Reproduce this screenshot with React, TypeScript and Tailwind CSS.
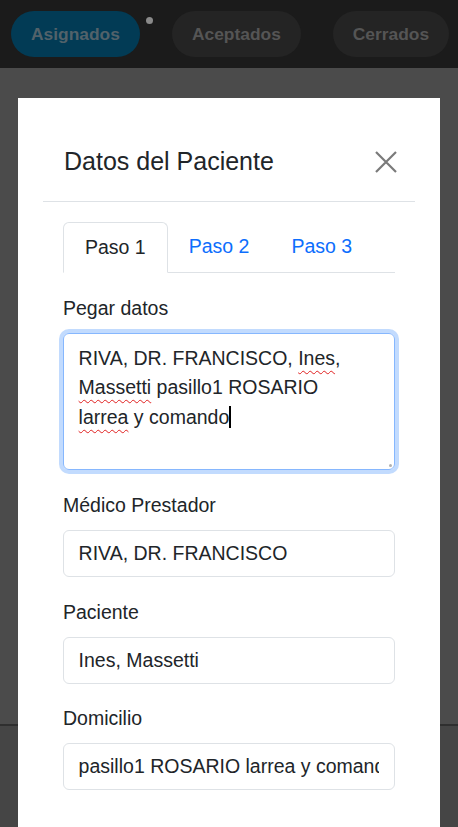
import React from "react";

const font = "font-['Liberation_Sans',Arial,sans-serif]";

const pills = [
  { label: "Asignados", active: true },
  { label: "Aceptados", active: false },
  { label: "Cerrados", active: false },
];

function Field({ label, value }: { label: string; value: string }) {
  return (
    <div className="mb-[20.5px]">
      <label className="block mb-[9.75px] text-[19.5px] leading-[29.25px] text-[#212529]">{label}</label>
      <div className="h-[47px] px-[14.6px] flex items-center border border-[#dee2e6] rounded-[6px] bg-white">
        <div className="w-full overflow-hidden whitespace-nowrap text-[19.5px] leading-[29.25px] text-[#212529]">{value}</div>
      </div>
    </div>
  );
}

const wavy = "underline decoration-wavy decoration-[#e02020] decoration-1 underline-offset-[5px]";

export default function App() {
  return (
    <div className={`relative h-[827px] w-[458px] overflow-hidden bg-[#454545] ${font}`}>
      {/* page behind the backdrop */}
      <div className="h-[68px] bg-[#1b1b1b] flex items-center pl-[11px] gap-[32px]">
        {pills.map((p, i) => (
          <div key={i} className="relative">
            <div
              className={
                p.active
                  ? "h-[46px] px-[20px] rounded-full bg-[#023b55] flex items-center text-[17.4px] font-bold text-[#52626a]"
                  : "h-[46px] px-[20px] rounded-full bg-[#242424] flex items-center text-[17.4px] font-bold text-[#555555]"
              }
            >
              {p.label}
            </div>
            {p.active && <span className="absolute right-[-13px] top-[6px] w-[7px] h-[7px] rounded-full bg-[#8a8a8a]" />}
          </div>
        ))}
      </div>
      <div className="h-[658px] bg-[#4b4b4b] border-b-2 border-[#2f2f2f]" />

      {/* modal */}
      <div className="absolute top-[98px] left-[18px] right-[18px] bottom-0 bg-white">
        <div className="mx-[25px] pt-[45px] pb-[22px] pl-[21px] pr-[19px] border-b border-[#dee2e6] flex items-center justify-between">
          <h5 className="text-[25px] leading-[36px] text-[#212529]">Datos del Paciente</h5>
          <svg width="22" height="22" viewBox="0 0 22 22" className="mr-[-1px] mt-[2px]">
            <path d="M1 1 L21 21 M21 1 L1 21" stroke="#7a7a7a" strokeWidth="2.2" fill="none" />
          </svg>
        </div>

        <div className="px-[45px] pt-[20px]">
          <div className="flex border-b border-[#dee2e6] text-[19.5px] leading-[29.25px]">
            <div className="-mb-px px-[21px] py-[9.75px] border border-[#dee2e6] border-b-white rounded-t-[6px] bg-white text-[#212529]">
              Paso 1
            </div>
            <div className="px-[21px] py-[9.75px] text-[#0d6efd]">Paso 2</div>
            <div className="px-[21px] py-[9.75px] text-[#0d6efd]">Paso 3</div>
          </div>

          <div className="pt-[21px]">
            <div className="mb-[21.5px]">
              <label className="block mb-[9.75px] text-[19.5px] leading-[29.25px] text-[#212529]">Pegar datos</label>
              <div className="relative h-[137px] px-[14.6px] pt-[10px] border border-[#86b7fe] rounded-[6px] shadow-[0_0_0_4px_rgba(13,110,253,0.25)] text-[19.5px] leading-[29.5px] text-[#212529]">
                RIVA, DR. FRANCISCO, <span className={wavy}>Ines</span>,
                <br />
                <span className={wavy}>Massetti</span> pasillo1 ROSARIO
                <br />
                <span className={wavy}>larrea</span> y comando
                <span className="inline-block w-[1.5px] h-[22px] bg-black align-[-4px]" />
                <span className="absolute right-[2px] bottom-[2px] w-[3px] h-[3px] bg-[#b0b0b0] rounded-full" />
              </div>
            </div>
            <Field label="Médico Prestador" value="RIVA, DR. FRANCISCO" />
            <Field label="Paciente" value="Ines, Massetti" />
            <Field label="Domicilio" value="pasillo1 ROSARIO larrea y comando" />
          </div>
        </div>
      </div>
    </div>
  );
}
